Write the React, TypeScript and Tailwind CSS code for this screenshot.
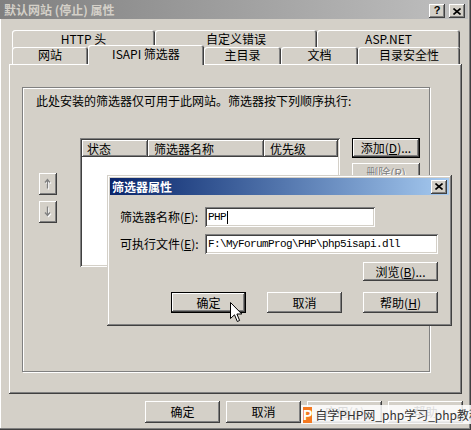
import React from "react";

const RAISED =
  "shadow-[inset_-1px_-1px_0_#404040,inset_1px_1px_0_#ffffff,inset_-2px_-2px_0_#808080,inset_2px_2px_0_#d4d0c8]";
const DEFAULT_BTN =
  "border border-black shadow-[inset_-1px_-1px_0_#404040,inset_1px_1px_0_#ffffff,inset_-2px_-2px_0_#808080]";
const SUNKEN =
  "shadow-[inset_1px_1px_0_#808080,inset_-1px_-1px_0_#ffffff,inset_2px_2px_0_#404040,inset_-2px_-2px_0_#d4d0c8]";
const TAB =
  "rounded-t-[3px] shadow-[inset_1px_1px_0_#ffffff,inset_-1px_0_0_#404040,inset_-2px_0_0_#808080]";

function Btn({
  children,
  w = "w-[75px]",
  h = "h-[22px]",
  def = false,
  disabled = false,
}: {
  children: React.ReactNode;
  w?: string;
  h?: string;
  def?: boolean;
  disabled?: boolean;
}) {
  return (
    <div
      className={`${w} ${h} bg-[#d4d0c8] flex items-center justify-center leading-none ${
        def ? DEFAULT_BTN : RAISED
      } ${disabled ? "text-[#808080] [text-shadow:1px_1px_0_#ffffff]" : "text-black"}`}
    >
      {children}
    </div>
  );
}

function Arrow({ down = false }: { down?: boolean }) {
  const d = down
    ? "M3.5 0.5 L3.5 9 M1 6.5 L3.5 9.5 L6 6.5"
    : "M3.5 10.5 L3.5 2 M1 4.5 L3.5 1.5 L6 4.5";
  return (
    <svg width="9" height="12" viewBox="0 0 9 12">
      <path d={d} transform="translate(1 1)" stroke="#ffffff" strokeWidth="1.3" fill="none" />
      <path d={d} stroke="#808080" strokeWidth="1.3" fill="none" />
    </svg>
  );
}

function TitleBtn({ kind }: { kind: "help" | "close" }) {
  return (
    <div className={`w-[16px] h-[14px] bg-[#d4d0c8] flex items-center justify-center ${RAISED}`}>
      {kind === "help" ? (
        <span className="font-['Liberation_Sans',sans-serif] font-bold text-[11px] leading-none text-black -mt-[1px]">
          ?
        </span>
      ) : (
        <svg width="8" height="7" viewBox="0 0 8 7">
          <path d="M0.5 0.5 L7.5 6.5 M7.5 0.5 L0.5 6.5" stroke="#000" strokeWidth="1.6" />
        </svg>
      )}
    </div>
  );
}

function U({ c }: { c: string }) {
  return <span className="underline underline-offset-[1px]">{c}</span>;
}

export default function App() {
  return (
    <div className="relative w-[471px] h-[430px] bg-[#d4d0c8] overflow-hidden font-['Noto_Sans_CJK_SC','Noto_Sans',sans-serif] text-[12px] text-black shadow-[inset_-1px_-1px_0_#404040,inset_-2px_-2px_0_#808080,inset_1px_0_0_#ffffff]">
      {/* Title bar */}
      <div className="w-[468px] h-[19px] bg-linear-to-r from-[#808080] to-[#c0c0c0] flex items-start pl-[4px] pr-[3px]">
        <span className="text-[#d4d0c8] font-bold leading-[19px] text-[12px]">默认网站 (停止) 属性</span>
        <div className="ml-auto mt-[4px] flex gap-[4px]">
          <TitleBtn kind="help" />
          <TitleBtn kind="close" />
        </div>
      </div>

      {/* Tabs */}
      <div className="mt-[11px] ml-[12px] flex h-[17px]">
        {[
          ["HTTP 头", "w-[143px]"],
          ["自定义错误", "w-[162px]"],
          ["ASP.NET", "w-[143px]"],
        ].map(([t, w]) => (
          <div key={t} className={`${w} h-[20px] bg-[#d4d0c8] ${TAB} flex justify-center pt-[2px] leading-[14px]`}>
            {t}
          </div>
        ))}
      </div>
      <div className="ml-[12px] flex h-[17px] items-end relative z-10">
        {[
          ["网站", "w-[76px]", false],
          ["ISAPI 筛选器", "w-[116px]", true],
          ["主目录", "w-[77px]", false],
          ["文档", "w-[77px]", false],
          ["目录安全性", "w-[102px]", false],
        ].map(([t, w, sel]) => (
          <div
            key={t as string}
            className={`${w} bg-[#d4d0c8] ${TAB} flex justify-center leading-[14px] ${
              sel ? "h-[20px] -mb-[1px] pt-[2px] relative z-10" : "h-[17px] pt-[1px]"
            }`}
          >
            {t as string}
          </div>
        ))}
      </div>

      {/* Tab panel */}
      <div className={`relative ml-[9px] w-[453px] h-[330px] bg-[#d4d0c8] ${RAISED} pt-[23px] pl-[13px]`}>
        <div className="w-[408px] h-[285px] border border-[#808080] shadow-[1px_1px_0_#ffffff,inset_1px_1px_0_#ffffff]">
          <div className="pl-[13px] pt-[6px] leading-[14px]">此处安装的筛选器仅可用于此网站。筛选器按下列顺序执行:</div>
          <div className="mt-[30px] flex items-start">
            <div className="ml-[16px] mt-[35px] flex flex-col gap-[6px]">
              <div className={`w-[18px] h-[22px] bg-[#d4d0c8] ${RAISED} flex items-center justify-center`}>
                <Arrow />
              </div>
              <div className={`w-[18px] h-[22px] bg-[#d4d0c8] ${RAISED} flex items-center justify-center`}>
                <Arrow down />
              </div>
            </div>
            <div className={`ml-[23px] w-[260px] h-[129px] bg-white ${SUNKEN} p-[2px]`}>
              <div className="flex h-[17px]">
                <div className={`w-[66px] h-full bg-[#d4d0c8] ${RAISED} pl-[5px] leading-[17px]`}>状态</div>
                <div className={`w-[116px] h-full bg-[#d4d0c8] ${RAISED} pl-[6px] leading-[17px]`}>筛选器名称</div>
                <div className={`flex-1 h-full bg-[#d4d0c8] ${RAISED} pl-[6px] leading-[17px]`}>优先级</div>
              </div>
            </div>
            <div className="ml-[12px] flex flex-col gap-[5px]">
              <Btn w="w-[68px]" h="h-[20px]" def>
                添加(<U c="D" />)...
              </Btn>
              <Btn w="w-[68px]" h="h-[20px]" disabled>
                删除(<U c="R" />)
              </Btn>
            </div>
          </div>
        </div>
      </div>

      {/* Bottom buttons */}
      <div className="mt-[7px] ml-[145px] flex gap-[6px]">
        <Btn>确定</Btn>
        <Btn>取消</Btn>
        <Btn>应用(<U c="A" />)</Btn>
        <Btn>帮助</Btn>
      </div>

      {/* Sub dialog (overlay window) */}
      <div className="absolute left-[107px] top-[175px] w-[345px] h-[151px] bg-[#d4d0c8] p-[3px] shadow-[inset_-1px_-1px_0_#404040,inset_1px_1px_0_#d4d0c8,inset_-2px_-2px_0_#808080,inset_2px_2px_0_#ffffff]">
        <div className="h-[17px] bg-linear-to-r from-[#0a246a] to-[#a6caf0] flex items-center pl-[2px] pr-[2px]">
          <span className="text-white font-bold leading-none">筛选器属性</span>
          <div className="ml-auto">
            <TitleBtn kind="close" />
          </div>
        </div>
        <div className="pl-[10px] w-[328px]">
          <div className="mt-[12px] flex items-center h-[20px]">
            <div className="w-[85px] leading-none">
              筛选器名称(<U c="F" />):
            </div>
            <div className={`w-[170px] h-[20px] bg-white ${SUNKEN} flex items-center pl-[3px] font-['Liberation_Mono',monospace] text-[11px] tracking-[-0.6px]`}>
              PHP<span className="inline-block w-[1px] h-[13px] bg-black ml-[1px]" />
            </div>
          </div>
          <div className="mt-[7px] flex items-center h-[20px]">
            <div className="w-[85px] leading-none">
              可执行文件(<U c="E" />):
            </div>
            <div className={`w-[233px] h-[20px] bg-white ${SUNKEN} flex items-center pl-[3px] font-['Liberation_Mono',monospace] text-[11px] tracking-[-0.6px] whitespace-nowrap overflow-hidden`}>
              F:\MyForumProg\PHP\php5isapi.dll
            </div>
          </div>
          <div className="mt-[8px] flex justify-end">
            <Btn h="h-[19px]">
              浏览(<U c="B" />)...
            </Btn>
          </div>
          <div className="mt-[11px] flex justify-end gap-[21px]">
            <Btn h="h-[21px]" def>
              确定
            </Btn>
            <Btn h="h-[21px]">取消</Btn>
            <Btn h="h-[21px]">
              帮助(<U c="H" />)
            </Btn>
          </div>
        </div>
      </div>

      {/* Mouse cursor */}
      <svg className="absolute left-[230px] top-[302px]" width="13" height="21" viewBox="0 0 13 21">
        <path
          d="M0.5 0.5 L0.5 16.5 L4.5 12.8 L7.3 19.5 L9.6 18.5 L6.9 12 L11.8 12 Z"
          fill="#ffffff"
          stroke="#000000"
          strokeWidth="1"
          strokeLinejoin="miter"
        />
      </svg>

      {/* Watermark */}
      <div className="absolute left-[301px] top-[405px] w-[170px] h-[19px] bg-white/85 flex items-center overflow-hidden whitespace-nowrap">
        <div className="ml-[2px] w-[15px] h-[16px] bg-[#f47920] flex items-center justify-center text-white font-['Liberation_Sans',sans-serif] font-bold text-[14px] leading-none">
          P
        </div>
        <span className="ml-[3px] text-[12px] text-[#333333] leading-none">自学PHP网_php学习_php教程</span>
      </div>
    </div>
  );
}
